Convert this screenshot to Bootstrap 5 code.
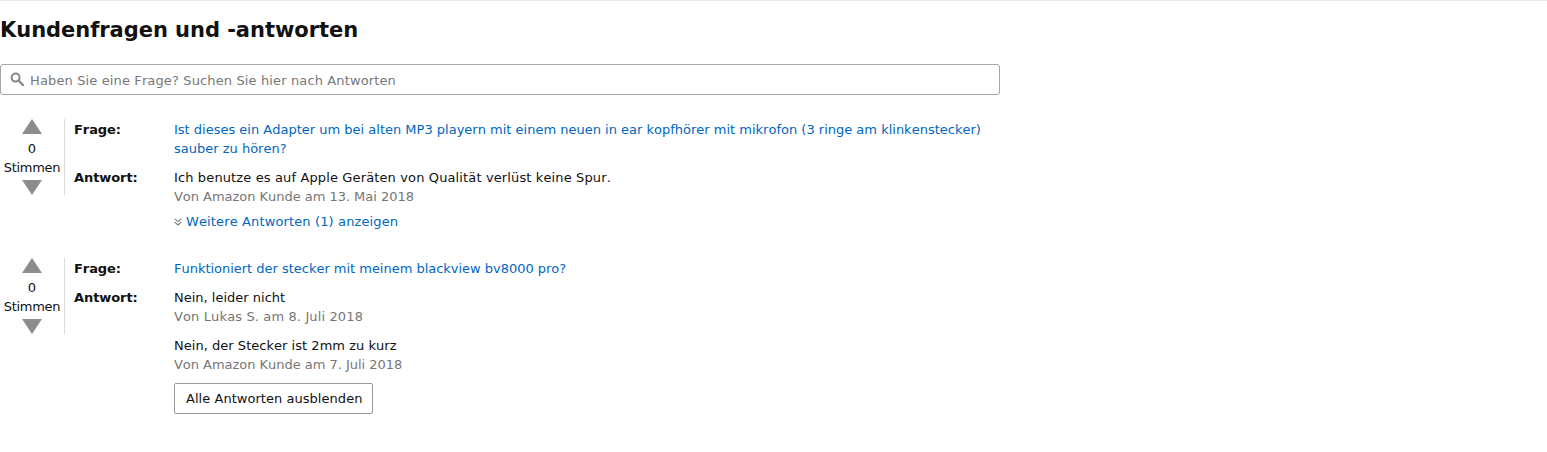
<!doctype html>
<html lang="de">
<head>
<meta charset="utf-8">
<title>Kundenfragen und -antworten</title>
<link rel="stylesheet" href="https://cdn.jsdelivr.net/npm/bootstrap@5.3.0/dist/css/bootstrap.min.css">
<style>
body{font-family:"DejaVu Sans",sans-serif;font-size:13px;line-height:19px;color:#111;background:#fff;border-top:1px solid #e7e7e7;height:452px;overflow:hidden;font-kerning:none}
.qa-wrap{width:1000px}
.qa-title{font-family:"DejaVu Sans",sans-serif;font-size:21px;font-weight:700;line-height:30px;margin:14px 0 19px;color:#111;letter-spacing:-.04px}
.qa-search{height:31px;border:1px solid #a6a6a6;border-radius:3px;padding:1px 0 0 9px;gap:6px;color:#777;margin-bottom:24px}
.qa-search svg{flex:none;margin-top:-2px}
.qa-item{margin-bottom:27px}
.qa-vote{width:65px;height:76px;border-right:1px solid #ddd;color:#111}
.qa-votes{letter-spacing:-.3px}
.tri-up,.tri-down{width:0;height:0;border-left:10px solid transparent;border-right:10px solid transparent}
.tri-up{border-bottom:15px solid #8d8d8d;margin-bottom:5px}
.tri-down{border-top:15px solid #8d8d8d;margin-top:3px}
.qa-body{padding:1px 0 0 9px;flex:1}
.qa-label{width:100px;flex:none;font-weight:700;letter-spacing:-.08px}
.qa-row{margin-bottom:10px}
.qa-link{color:#0066c0;text-decoration:none}
.qa-meta{color:#767676;letter-spacing:-.03px}
.qa-more{margin-top:6px;gap:4px}
.qa-answer{margin-bottom:10px}
.qa-answer.qa-last{margin-bottom:9px}
.qa-wide{letter-spacing:.13px}
.qa-fine{letter-spacing:.03px}
.qa-tight{letter-spacing:-.02px}
.qa-btn{font-size:13px;line-height:19px;color:#111;background:#fff;border:1px solid #999;border-radius:2px;padding:5px 10px 5px 11px;letter-spacing:.04px}
.qa-btn:hover{color:#111;background:#f7f7f7;border-color:#888}
</style>
</head>
<body>
<div class="qa-wrap">
  <h2 class="qa-title">Kundenfragen und -antworten</h2>
  <div class="qa-search d-flex align-items-center">
    <svg width="14" height="14" viewBox="0 0 14 14" aria-hidden="true"><circle cx="5.6" cy="5.6" r="4" fill="none" stroke="#888" stroke-width="2"/><path d="M8.6 8.6 13 13" stroke="#888" stroke-width="2.4" stroke-linecap="round"/></svg>
    <span class="qa-wide">Haben Sie eine Frage? Suchen Sie hier nach Antworten</span>
  </div>

  <div class="qa-item d-flex align-items-start">
    <div class="qa-vote d-flex flex-column align-items-center text-center">
      <div class="tri-up"></div>
      <div>0</div>
      <div class="qa-votes">Stimmen</div>
      <div class="tri-down"></div>
    </div>
    <div class="qa-body">
      <div class="d-flex qa-row">
        <div class="qa-label">Frage:</div>
        <div class="flex-fill"><a class="qa-link" href="#">Ist dieses ein Adapter um bei alten MP3 playern mit einem neuen in ear kopfhörer mit mikrofon (3 ringe am klinkenstecker) sauber zu hören?</a></div>
      </div>
      <div class="d-flex">
        <div class="qa-label">Antwort:</div>
        <div class="flex-fill">
          <div class="qa-wide">Ich benutze es auf Apple Geräten von Qualität verlüst keine Spur.</div>
          <div class="qa-meta">Von Amazon Kunde am 13. Mai 2018</div>
          <a class="qa-link qa-more d-inline-flex align-items-center" href="#">
            <svg width="8" height="8" viewBox="0 0 8 8" aria-hidden="true"><path d="M.7.8 4 3.6 7.3.8M.7 4.2 4 7 7.3 4.2" fill="none" stroke="#777" stroke-width="1.1"/></svg>
            <span class="qa-wide">Weitere Antworten (1) anzeigen</span>
          </a>
        </div>
      </div>
    </div>
  </div>

  <div class="qa-item d-flex align-items-start">
    <div class="qa-vote d-flex flex-column align-items-center text-center">
      <div class="tri-up"></div>
      <div>0</div>
      <div class="qa-votes">Stimmen</div>
      <div class="tri-down"></div>
    </div>
    <div class="qa-body">
      <div class="d-flex qa-row">
        <div class="qa-label">Frage:</div>
        <div class="flex-fill"><a class="qa-link qa-tight" href="#">Funktioniert der stecker mit meinem blackview bv8000 pro?</a></div>
      </div>
      <div class="d-flex">
        <div class="qa-label">Antwort:</div>
        <div class="flex-fill">
          <div class="qa-answer">
            <div>Nein, leider nicht</div>
            <div class="qa-meta qa-wide">Von Lukas S. am 8. Juli 2018</div>
          </div>
          <div class="qa-answer qa-last">
            <div class="qa-fine">Nein, der Stecker ist 2mm zu kurz</div>
            <div class="qa-meta">Von Amazon Kunde am 7. Juli 2018</div>
          </div>
          <button type="button" class="btn qa-btn">Alle Antworten ausblenden</button>
        </div>
      </div>
    </div>
  </div>
</div>
<script src="https://cdn.jsdelivr.net/npm/bootstrap@5.3.0/dist/js/bootstrap.bundle.min.js"></script>
</body>
</html>
